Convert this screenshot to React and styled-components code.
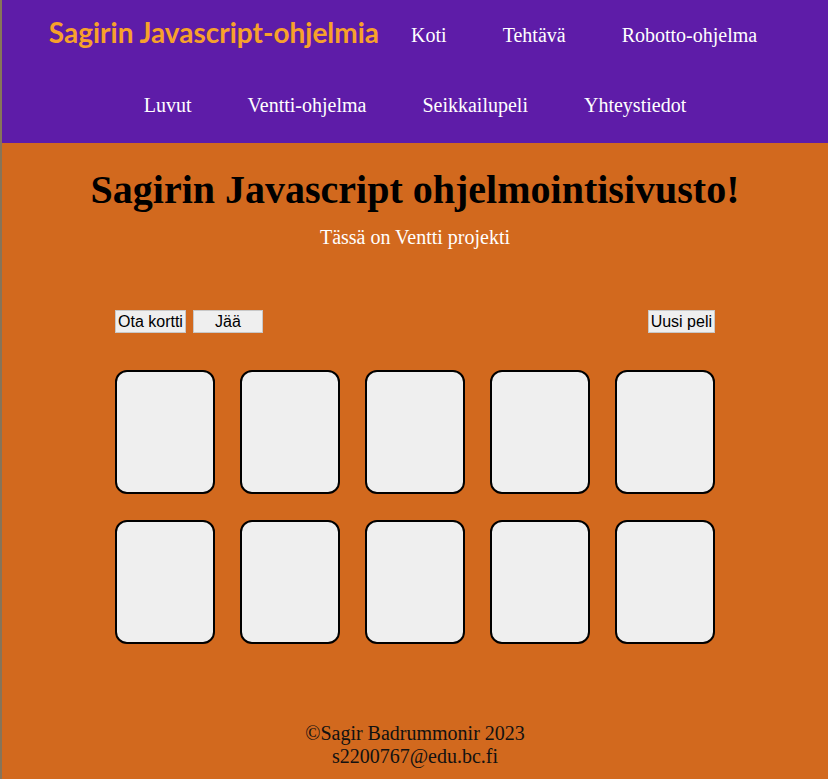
import React from "react";
import styled, { createGlobalStyle } from "styled-components";

const Global = createGlobalStyle`
  html, body { margin: 0; padding: 0; }
  body {
    background: #d2691e;
    font-family: "Liberation Serif", "Times New Roman", serif;
  }
`;

const Page = styled.div`
  min-height: 779px;
  background: #d2691e;
  border-left: 2px solid rgba(110, 120, 110, 0.75);
  display: flex;
  flex-direction: column;
`;

const Header = styled.header`
  background: #5e1ca8;
  display: flex;
  flex-wrap: wrap;
  justify-content: center;
  align-items: center;
  padding: 0 0 3px;
`;

const Brand = styled.div`
  font-family: Lato, "Open Sans", sans-serif;
  font-weight: 700;
  font-size: 28px;
  color: #f7a12b;
  padding: 0 4px;
  margin-bottom: 6px;
  white-space: nowrap;
`;

const NavLink = styled.a`
  color: #ffffff;
  font-size: 20px;
  line-height: 22px;
  padding: 24px 28px;
  text-decoration: none;
  white-space: nowrap;
`;

const Main = styled.main`
  display: flex;
  flex-direction: column;
  align-items: center;
  flex: 1;
`;

const Title = styled.h1`
  font-size: 40px;
  font-weight: 700;
  color: #000;
  margin: 24px 0 0;
  line-height: 46px;
`;

const Subtitle = styled.p`
  color: #fff;
  font-size: 20px;
  margin: 13px 0 0;
`;

const Game = styled.section`
  width: 600px;
  margin-top: 61px;
  display: flex;
  flex-direction: column;
`;

const Controls = styled.div`
  display: flex;
  align-items: center;
  gap: 7px;
`;

const Spacer = styled.div`
  flex: 1;
`;

const Button = styled.button`
  font-family: "Liberation Sans", Arial, sans-serif;
  font-size: 16px;
  color: #000;
  background: #efefef;
  border: 1px solid #c8c8c8;
  height: 23px;
  padding: 0 2px;
  width: ${(p) => (p.$w ? `${p.$w}px` : "auto")};
  border-radius: 0;
`;

const Grid = styled.div`
  margin-top: 37px;
  display: grid;
  grid-template-columns: repeat(5, 100px);
  column-gap: 25px;
  row-gap: 26px;
`;

const Card = styled.div`
  box-sizing: border-box;
  width: 100px;
  height: 124px;
  background: #efefef;
  border: 2px solid #000;
  border-radius: 12px;
`;

const Footer = styled.footer`
  text-align: center;
  font-size: 20px;
  line-height: 23px;
  color: #111;
  padding: 0 0 11px;
  margin-top: auto;
`;

export default function App() {
  const links = [
    "Koti",
    "Tehtävä",
    "Robotto-ohjelma",
    "Luvut",
    "Ventti-ohjelma",
    "Seikkailupeli",
    "Yhteystiedot",
  ];
  return (
    <>
      <Global />
      <Page>
        <Header>
          <Brand>Sagirin Javascript-ohjelmia</Brand>
          {links.map((l) => (
            <NavLink key={l} href="#">
              {l}
            </NavLink>
          ))}
        </Header>
        <Main>
          <Title>Sagirin Javascript ohjelmointisivusto!</Title>
          <Subtitle>Tässä on Ventti projekti</Subtitle>
          <Game>
            <Controls>
              <Button>Ota kortti</Button>
              <Button $w={70}>Jää</Button>
              <Spacer />
              <Button>Uusi peli</Button>
            </Controls>
            <Grid>
              {Array.from({ length: 10 }).map((_, i) => (
                <Card key={i} />
              ))}
            </Grid>
          </Game>
        </Main>
        <Footer>
          ©Sagir Badrummonir 2023
          <br />
          s2200767@edu.bc.fi
        </Footer>
      </Page>
    </>
  );
}
